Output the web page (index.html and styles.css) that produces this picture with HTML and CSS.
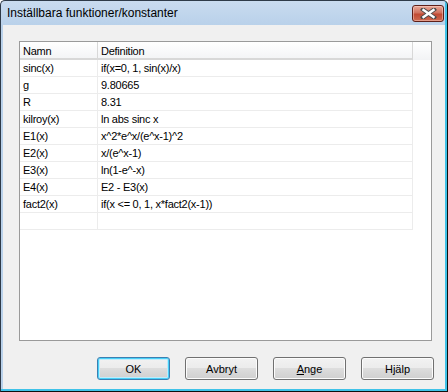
FILE: index.html
```html
<!DOCTYPE html>
<html lang="sv">
<head>
    <meta charset="UTF-8">
    <title>Inställbara funktioner/konstanter</title>
    <link rel="stylesheet" href="styles.css">
</head>
<body>
    <div class="window">
        <div class="titlebar">
            <span class="title">Inställbara funktioner/konstanter</span>
            <button class="close-btn">
                <svg width="17" height="11" viewBox="0 0 17 11">
                    <path d="M3 1.5 L14 9.5 M14 1.5 L3 9.5" stroke="#4a4a4a" stroke-width="4.2" stroke-linecap="square"/>
                    <path d="M3.5 2 L13.5 9 M13.5 2 L3.5 9" stroke="#fff" stroke-width="2.4" stroke-linecap="square"/>
                </svg>
            </button>
        </div>
        <div class="client">
            <div class="listbox">
                <div class="row head">
                    <div class="cell name">Namn</div>
                    <div class="cell def">Definition</div>
                </div>
                <div class="row"><div class="cell name">sinc(x)</div><div class="cell def">if(x=0, 1, sin(x)/x)</div></div>
                <div class="row"><div class="cell name">g</div><div class="cell def">9.80665</div></div>
                <div class="row"><div class="cell name">R</div><div class="cell def">8.31</div></div>
                <div class="row"><div class="cell name">kilroy(x)</div><div class="cell def">ln abs sinc x</div></div>
                <div class="row"><div class="cell name">E1(x)</div><div class="cell def">x^2*e^x/(e^x-1)^2</div></div>
                <div class="row"><div class="cell name">E2(x)</div><div class="cell def">x/(e^x-1)</div></div>
                <div class="row"><div class="cell name">E3(x)</div><div class="cell def">ln(1-e^-x)</div></div>
                <div class="row"><div class="cell name">E4(x)</div><div class="cell def">E2 - E3(x)</div></div>
                <div class="row"><div class="cell name">fact2(x)</div><div class="cell def">if(x &lt;= 0, 1, x*fact2(x-1))</div></div>
                <div class="row"><div class="cell name"></div><div class="cell def"></div></div>
            </div>
            <div class="buttons">
                <button class="btn default">OK</button>
                <button class="btn">Avbryt</button>
                <button class="btn"><u>A</u>nge</button>
                <button class="btn">Hjälp</button>
            </div>
        </div>
    </div>
</body>
</html>
```
FILE: styles.css
```css
body{
    margin: 0;
    background: #ffffff;
    font-family: "Liberation Sans", Arial, sans-serif;
}
.window{
    width: 448px;
    height: 392px;
    box-sizing: border-box;
    border: 1px solid #2e3a48;
    border-right-color: #101010;
    border-bottom-color: #101010;
    border-radius: 5px 5px 0 0;
    background: linear-gradient(#c9dbef, #b9d1ea 24px);
    padding: 0 2px 2px 2px;
    box-shadow: inset -2px -2px 0 #3fc2e8;
    display: flex;
    flex-direction: column;
}
.titlebar{
    height: 24px;
    display: flex;
    justify-content: space-between;
    align-items: flex-start;
    padding: 0 1px 0 4px;
}
.title{
    font-size: 12px;
    color: #000;
    margin-top: 5px;
}
.close-btn{
    width: 32px;
    height: 17px;
    margin-top: 4px;
    padding: 0;
    border: 1px solid #5e1f18;
    border-radius: 3px;
    background: linear-gradient(#e8a898, #d0725e 45%, #c14a33 55%, #cf6a50);
    box-shadow: inset 0 0 0 1px rgba(255, 220, 210, 0.45);
    display: flex;
    align-items: center;
    justify-content: center;
}
.client{
    flex: 1;
    background: #f0f0f0;
    padding: 16px 11px 0 16px;
}
.listbox{
    width: 413px;
    height: 300px;
    box-sizing: border-box;
    border: 1px solid #9a9a9a;
    background: #fff;
    font-size: 11px;
    letter-spacing: -0.25px;
    color: #000;
}
.row{
    display: flex;
    height: 17px;
}
.row.head{
    height: 18px;
    background: linear-gradient(#ffffff, #f2f3f5);
}
.cell{
    box-sizing: border-box;
    border-bottom: 1px solid #ececec;
    border-right: 1px solid #ececec;
    padding: 2px 0 0 3px;
    white-space: nowrap;
}
.head .cell{
    border-bottom: 2px solid #d8d8d8;
    border-right-color: #d8d8d8;
    padding-top: 3px;
}
.name{
    width: 78px;
}
.def{
    width: 315px;
}
.buttons{
    display: flex;
    justify-content: flex-end;
    gap: 15px;
    margin-top: 16px;
}
.btn{
    width: 73px;
    height: 23px;
    border: 1px solid #707070;
    border-radius: 3px;
    background: linear-gradient(#f2f2f2, #ebebeb 50%, #dddddd 50%, #cfcfcf);
    box-shadow: inset 0 0 0 1px #fcfcfc;
    font-family: "Liberation Sans", Arial, sans-serif;
    font-size: 11px;
    color: #000;
    padding: 0;
}
.btn.default{
    border-color: #3c7fb1;
    box-shadow: inset 0 0 0 1px #48d0f8, inset 0 0 0 2px #c0ecfb;
}
```
